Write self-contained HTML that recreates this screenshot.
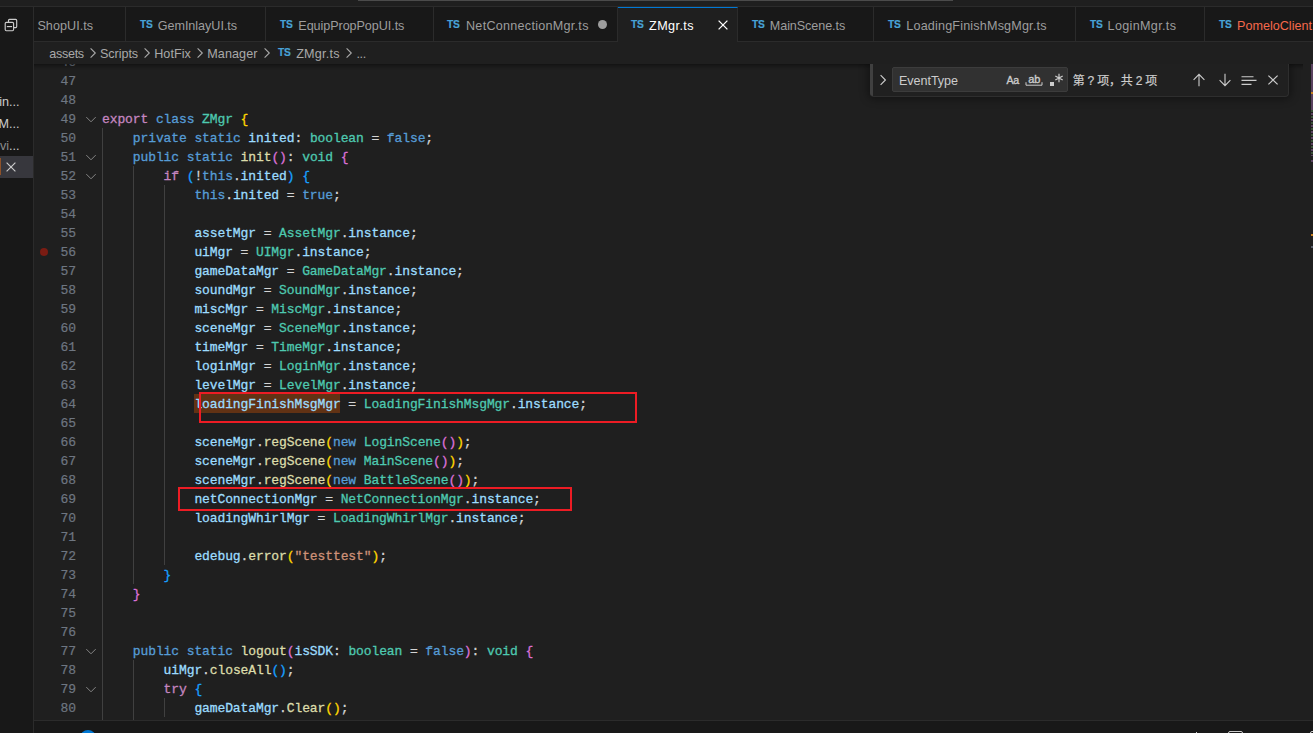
<!DOCTYPE html>
<html lang="zh-CN">
<head>
<meta charset="utf-8">
<title>ZMgr.ts</title>
<style>
html,body{margin:0;padding:0;background:#1f1f1f;}
body{width:1313px;height:733px;position:relative;overflow:hidden;font-family:"Liberation Sans","Noto Sans CJK SC",sans-serif;font-size:13px;color:#cccccc;}
div,span,svg{box-sizing:border-box}
.abs{position:absolute}
#top{position:absolute;left:0;top:0;width:1313px;height:6px;background:#1f1f1f}
#topline{position:absolute;left:0;top:6px;width:1313px;height:1px;background:#2b2b2b}
#cc{position:absolute;left:358px;top:0;width:595px;height:1px;background:#4b4b4b}
#side{position:absolute;left:0;top:7px;width:33px;height:726px;background:#181818}
#sideb{position:absolute;left:33px;top:7px;width:1px;height:726px;background:#2b2b2b}
#tabbar{position:absolute;left:34px;top:7px;width:1279px;height:35px;background:#181818;border-bottom:1px solid #2b2b2b}
.tab{position:absolute;top:7px;height:35px;background:#181818;border-right:1px solid #2b2b2b;border-bottom:1px solid #2b2b2b}
.tab.act{background:#1f1f1f;border-top:1px solid #0078d4;border-bottom:none}
.ts{position:absolute;font-family:"Liberation Sans",sans-serif;font-weight:bold;font-size:11px;line-height:14px;color:#48a3d8;letter-spacing:-0.35px;transform:scaleX(.93);transform-origin:0 0;-webkit-text-stroke:0.2px}
.tl{position:absolute;top:18px;font-size:12.6px;line-height:17px;white-space:pre}
.dot{position:absolute;width:9px;height:9px;border-radius:50%;background:#9d9d9d}
#bc{position:absolute;left:34px;top:42px;width:1279px;height:22px;background:#1f1f1f}
.bt{position:absolute;top:46px;font-size:12.6px;line-height:17px;color:#a9a9a9;white-space:pre}
#shadow{position:absolute;left:34px;top:64px;width:1269px;height:6px;box-shadow:inset 0 6px 6px -6px rgba(0,0,0,.8)}
#ed{position:absolute;left:34px;top:64px;width:1279px;height:656px;overflow:hidden}
.ln{-webkit-text-stroke:0.2px;position:absolute;left:33.5px;width:42.5px;text-align:right;color:#6e7681;font:13px/19px "Liberation Mono",monospace;letter-spacing:-0.104px;height:19px}
.cl{position:absolute;left:102px;height:19px;white-space:pre;font:13px/19px "Liberation Mono",monospace;letter-spacing:-0.104px;color:#d4d4d4;-webkit-text-stroke:0.3px}
.fold{position:absolute;left:83px}
.ig{position:absolute;width:1px;background:#404040}
#hl{position:absolute;left:194px;top:394px;width:146px;height:19px;background:#613214}
.rr{position:absolute;border:2px solid #ed1c24}
#panelb{position:absolute;left:34px;top:720px;width:1279px;height:1px;background:#2b2b2b}
#panel{position:absolute;left:34px;top:721px;width:1279px;height:12px;background:#181818}
#findclip{position:absolute;left:834px;top:64px;width:479px;height:80px;overflow:hidden}
#find{position:absolute;left:36px;top:0px;width:419px;height:33px;background:#202020;border-bottom:1px solid #2e2e2e;border-right:1px solid #2e2e2e;border-radius:0 0 4px 4px;box-shadow:0 0 8px 2px rgba(0,0,0,.4)}
#sash{position:absolute;left:0;top:0;width:3px;height:32px;background:#404040;border-radius:0 0 0 4px}
#finput{position:absolute;left:22px;top:3px;width:176px;height:25px;background:#313131;border:1px solid #3c3c3c;border-radius:2px}
#ftext{position:absolute;left:6px;top:4.5px;font-size:12.6px;line-height:17px;color:#cccccc;letter-spacing:-0.06px}
.fi{position:absolute;line-height:16px;color:#cccccc}
#fcount{-webkit-text-stroke:0.2px;position:absolute;left:202.7px;top:8px;font-size:12px;line-height:18px;color:#cccccc;white-space:pre;letter-spacing:-0.2px}
.st{position:absolute;right:1293.5px;font-size:12.6px;line-height:17px;color:#cccccc;white-space:pre}
#selrow{position:absolute;left:0;top:156px;width:33px;height:22px;background:#37373d}
#selbar{position:absolute;left:0;top:2px;width:1px;height:17px;background:#8f5229}
#mm{position:absolute;left:1311px;top:64px;width:2px;height:656px}
</style>
</head>
<body>
<div id="top"></div><div id="cc"></div><div id="topline"></div>
<div id="tabbar"></div>
<div class="tab" style="left:34px;width:92px"></div>
<span class="tl" style="left:37.4px;color:#9d9d9d;letter-spacing:0.054px">ShopUI.ts</span>
<div class="tab" style="left:126px;width:140px"></div>
<span class="ts" style="left:139.6px;top:17px">TS</span>
<span class="tl" style="left:157.7px;color:#9d9d9d;letter-spacing:-0.029px">GemInlayUI.ts</span>
<div class="tab" style="left:266px;width:168px"></div>
<span class="ts" style="left:279.9px;top:17px">TS</span>
<span class="tl" style="left:298.3px;color:#9d9d9d;letter-spacing:-0.065px">EquipPropPopUI.ts</span>
<div class="tab" style="left:434px;width:184px"></div>
<span class="ts" style="left:446.6px;top:17px">TS</span>
<span class="tl" style="left:466.0px;color:#9d9d9d;letter-spacing:0.268px">NetConnectionMgr.ts</span>
<div class="dot" style="left:598px;top:20px"></div>
<div class="tab act" style="left:618px;width:120px"></div>
<span class="ts" style="left:631.4px;top:17px">TS</span>
<span class="tl" style="left:649.1px;color:#ffffff;letter-spacing:0.402px">ZMgr.ts</span>
<svg style="position:absolute;left:715px;top:17px" width="16" height="16" viewBox="0 0 16 16"><path d="M3.6 3.6l8.8 8.8M12.4 3.6l-8.8 8.8" stroke="#ffffff" stroke-width="1.3" fill="none"/></svg>
<div class="tab" style="left:738px;width:136px"></div>
<span class="ts" style="left:751.6px;top:17px">TS</span>
<span class="tl" style="left:769.8px;color:#9d9d9d;letter-spacing:-0.076px">MainScene.ts</span>
<div class="tab" style="left:874px;width:202px"></div>
<span class="ts" style="left:887.7px;top:17px">TS</span>
<span class="tl" style="left:906.3px;color:#9d9d9d;letter-spacing:0.173px">LoadingFinishMsgMgr.ts</span>
<div class="tab" style="left:1076px;width:129px"></div>
<span class="ts" style="left:1089.5px;top:17px">TS</span>
<span class="tl" style="left:1107.6px;color:#9d9d9d;letter-spacing:0.326px">LoginMgr.ts</span>
<div class="tab" style="left:1205px;width:196px"></div>
<span class="ts" style="left:1219.1px;top:17px">TS</span>
<span class="tl" style="left:1237.0px;color:#f6694b;letter-spacing:0.006px">PomeloClient.ts</span>
<div id="bc"></div>

<div id="hl"></div>
<div class="ig" style="left:102px;top:128px;height:592px"></div>
<div class="ig" style="left:133px;top:166px;height:418px"></div>
<div class="ig" style="left:164px;top:185px;height:380px"></div>
<div class="ig" style="left:133px;top:660px;height:60px"></div>
<div class="ig" style="left:164px;top:698px;height:19px"></div>
<div class="ln" style="top:53px">46</div>
<div class="ln" style="top:72px">47</div>
<div class="ln" style="top:91px">48</div>
<div class="ln" style="top:110px">49</div>
<svg class="fold" style="top:112px" width="16" height="16" viewBox="0 0 16 16"><path d="M3.3 5.1 8 9.8l4.7-4.7" fill="none" stroke="#858585" stroke-width="1"/></svg>
<div class="cl" style="top:110px"><span style="color:#c586c0">export</span> <span style="color:#569cd6">class</span> <span style="color:#4ec9b0">ZMgr</span> <span style="color:#ffd700">{</span></div>
<div class="ln" style="top:129px">50</div>
<div class="cl" style="top:129px">    <span style="color:#569cd6">private</span> <span style="color:#569cd6">static</span> <span style="color:#9cdcfe">inited</span><span style="color:#d4d4d4">: </span><span style="color:#4ec9b0">boolean</span><span style="color:#d4d4d4"> = </span><span style="color:#569cd6">false</span><span style="color:#d4d4d4">;</span></div>
<div class="ln" style="top:148px">51</div>
<svg class="fold" style="top:150px" width="16" height="16" viewBox="0 0 16 16"><path d="M3.3 5.1 8 9.8l4.7-4.7" fill="none" stroke="#858585" stroke-width="1"/></svg>
<div class="cl" style="top:148px">    <span style="color:#569cd6">public</span> <span style="color:#569cd6">static</span> <span style="color:#dcdcaa">init</span><span style="color:#da70d6">()</span><span style="color:#d4d4d4">: </span><span style="color:#4ec9b0">void</span> <span style="color:#da70d6">{</span></div>
<div class="ln" style="top:167px">52</div>
<svg class="fold" style="top:169px" width="16" height="16" viewBox="0 0 16 16"><path d="M3.3 5.1 8 9.8l4.7-4.7" fill="none" stroke="#858585" stroke-width="1"/></svg>
<div class="cl" style="top:167px">        <span style="color:#c586c0">if</span> <span style="color:#179fff">(</span><span style="color:#d4d4d4">!</span><span style="color:#569cd6">this</span><span style="color:#d4d4d4">.</span><span style="color:#9cdcfe">inited</span><span style="color:#179fff">)</span> <span style="color:#179fff">{</span></div>
<div class="ln" style="top:186px">53</div>
<div class="cl" style="top:186px">            <span style="color:#569cd6">this</span><span style="color:#d4d4d4">.</span><span style="color:#9cdcfe">inited</span><span style="color:#d4d4d4"> = </span><span style="color:#569cd6">true</span><span style="color:#d4d4d4">;</span></div>
<div class="ln" style="top:205px">54</div>
<div class="ln" style="top:224px">55</div>
<div class="cl" style="top:224px">            <span style="color:#9cdcfe">assetMgr</span><span style="color:#d4d4d4"> = </span><span style="color:#4ec9b0">AssetMgr</span><span style="color:#d4d4d4">.</span><span style="color:#9cdcfe">instance</span><span style="color:#d4d4d4">;</span></div>
<div class="ln" style="top:243px">56</div>
<div class="cl" style="top:243px">            <span style="color:#9cdcfe">uiMgr</span><span style="color:#d4d4d4"> = </span><span style="color:#4ec9b0">UIMgr</span><span style="color:#d4d4d4">.</span><span style="color:#9cdcfe">instance</span><span style="color:#d4d4d4">;</span></div>
<div class="ln" style="top:262px">57</div>
<div class="cl" style="top:262px">            <span style="color:#9cdcfe">gameDataMgr</span><span style="color:#d4d4d4"> = </span><span style="color:#4ec9b0">GameDataMgr</span><span style="color:#d4d4d4">.</span><span style="color:#9cdcfe">instance</span><span style="color:#d4d4d4">;</span></div>
<div class="ln" style="top:281px">58</div>
<div class="cl" style="top:281px">            <span style="color:#9cdcfe">soundMgr</span><span style="color:#d4d4d4"> = </span><span style="color:#4ec9b0">SoundMgr</span><span style="color:#d4d4d4">.</span><span style="color:#9cdcfe">instance</span><span style="color:#d4d4d4">;</span></div>
<div class="ln" style="top:300px">59</div>
<div class="cl" style="top:300px">            <span style="color:#9cdcfe">miscMgr</span><span style="color:#d4d4d4"> = </span><span style="color:#4ec9b0">MiscMgr</span><span style="color:#d4d4d4">.</span><span style="color:#9cdcfe">instance</span><span style="color:#d4d4d4">;</span></div>
<div class="ln" style="top:319px">60</div>
<div class="cl" style="top:319px">            <span style="color:#9cdcfe">sceneMgr</span><span style="color:#d4d4d4"> = </span><span style="color:#4ec9b0">SceneMgr</span><span style="color:#d4d4d4">.</span><span style="color:#9cdcfe">instance</span><span style="color:#d4d4d4">;</span></div>
<div class="ln" style="top:338px">61</div>
<div class="cl" style="top:338px">            <span style="color:#9cdcfe">timeMgr</span><span style="color:#d4d4d4"> = </span><span style="color:#4ec9b0">TimeMgr</span><span style="color:#d4d4d4">.</span><span style="color:#9cdcfe">instance</span><span style="color:#d4d4d4">;</span></div>
<div class="ln" style="top:357px">62</div>
<div class="cl" style="top:357px">            <span style="color:#9cdcfe">loginMgr</span><span style="color:#d4d4d4"> = </span><span style="color:#4ec9b0">LoginMgr</span><span style="color:#d4d4d4">.</span><span style="color:#9cdcfe">instance</span><span style="color:#d4d4d4">;</span></div>
<div class="ln" style="top:376px">63</div>
<div class="cl" style="top:376px">            <span style="color:#9cdcfe">levelMgr</span><span style="color:#d4d4d4"> = </span><span style="color:#4ec9b0">LevelMgr</span><span style="color:#d4d4d4">.</span><span style="color:#9cdcfe">instance</span><span style="color:#d4d4d4">;</span></div>
<div class="ln" style="top:395px">64</div>
<div class="cl" style="top:395px">            <span style="color:#9cdcfe">loadingFinishMsgMgr</span><span style="color:#d4d4d4"> = </span><span style="color:#4ec9b0">LoadingFinishMsgMgr</span><span style="color:#d4d4d4">.</span><span style="color:#9cdcfe">instance</span><span style="color:#d4d4d4">;</span></div>
<div class="ln" style="top:414px">65</div>
<div class="ln" style="top:433px">66</div>
<div class="cl" style="top:433px">            <span style="color:#9cdcfe">sceneMgr</span><span style="color:#d4d4d4">.</span><span style="color:#dcdcaa">regScene</span><span style="color:#ffd700">(</span><span style="color:#569cd6">new</span> <span style="color:#4ec9b0">LoginScene</span><span style="color:#da70d6">()</span><span style="color:#ffd700">)</span><span style="color:#d4d4d4">;</span></div>
<div class="ln" style="top:452px">67</div>
<div class="cl" style="top:452px">            <span style="color:#9cdcfe">sceneMgr</span><span style="color:#d4d4d4">.</span><span style="color:#dcdcaa">regScene</span><span style="color:#ffd700">(</span><span style="color:#569cd6">new</span> <span style="color:#4ec9b0">MainScene</span><span style="color:#da70d6">()</span><span style="color:#ffd700">)</span><span style="color:#d4d4d4">;</span></div>
<div class="ln" style="top:471px">68</div>
<div class="cl" style="top:471px">            <span style="color:#9cdcfe">sceneMgr</span><span style="color:#d4d4d4">.</span><span style="color:#dcdcaa">regScene</span><span style="color:#ffd700">(</span><span style="color:#569cd6">new</span> <span style="color:#4ec9b0">BattleScene</span><span style="color:#da70d6">()</span><span style="color:#ffd700">)</span><span style="color:#d4d4d4">;</span></div>
<div class="ln" style="top:490px">69</div>
<div class="cl" style="top:490px">            <span style="color:#9cdcfe">netConnectionMgr</span><span style="color:#d4d4d4"> = </span><span style="color:#4ec9b0">NetConnectionMgr</span><span style="color:#d4d4d4">.</span><span style="color:#9cdcfe">instance</span><span style="color:#d4d4d4">;</span></div>
<div class="ln" style="top:509px">70</div>
<div class="cl" style="top:509px">            <span style="color:#9cdcfe">loadingWhirlMgr</span><span style="color:#d4d4d4"> = </span><span style="color:#4ec9b0">LoadingWhirlMgr</span><span style="color:#d4d4d4">.</span><span style="color:#9cdcfe">instance</span><span style="color:#d4d4d4">;</span></div>
<div class="ln" style="top:528px">71</div>
<div class="ln" style="top:547px">72</div>
<div class="cl" style="top:547px">            <span style="color:#9cdcfe">edebug</span><span style="color:#d4d4d4">.</span><span style="color:#dcdcaa">error</span><span style="color:#ffd700">(</span><span style="color:#ce9178">&quot;testtest&quot;</span><span style="color:#ffd700">)</span><span style="color:#d4d4d4">;</span></div>
<div class="ln" style="top:566px">73</div>
<div class="cl" style="top:566px">        <span style="color:#179fff">}</span></div>
<div class="ln" style="top:585px">74</div>
<div class="cl" style="top:585px">    <span style="color:#da70d6">}</span></div>
<div class="ln" style="top:604px">75</div>
<div class="ln" style="top:623px">76</div>
<div class="ln" style="top:642px">77</div>
<svg class="fold" style="top:644px" width="16" height="16" viewBox="0 0 16 16"><path d="M3.3 5.1 8 9.8l4.7-4.7" fill="none" stroke="#858585" stroke-width="1"/></svg>
<div class="cl" style="top:642px">    <span style="color:#569cd6">public</span> <span style="color:#569cd6">static</span> <span style="color:#dcdcaa">logout</span><span style="color:#da70d6">(</span><span style="color:#9cdcfe">isSDK</span><span style="color:#d4d4d4">: </span><span style="color:#4ec9b0">boolean</span><span style="color:#d4d4d4"> = </span><span style="color:#569cd6">false</span><span style="color:#da70d6">)</span><span style="color:#d4d4d4">: </span><span style="color:#4ec9b0">void</span> <span style="color:#da70d6">{</span></div>
<div class="ln" style="top:661px">78</div>
<div class="cl" style="top:661px">        <span style="color:#9cdcfe">uiMgr</span><span style="color:#d4d4d4">.</span><span style="color:#dcdcaa">closeAll</span><span style="color:#179fff">()</span><span style="color:#d4d4d4">;</span></div>
<div class="ln" style="top:680px">79</div>
<svg class="fold" style="top:682px" width="16" height="16" viewBox="0 0 16 16"><path d="M3.3 5.1 8 9.8l4.7-4.7" fill="none" stroke="#858585" stroke-width="1"/></svg>
<div class="cl" style="top:680px">        <span style="color:#c586c0">try</span> <span style="color:#179fff">{</span></div>
<div class="ln" style="top:699px">80</div>
<div class="cl" style="top:699px">            <span style="color:#9cdcfe">gameDataMgr</span><span style="color:#d4d4d4">.</span><span style="color:#dcdcaa">Clear</span><span style="color:#ffd700">()</span><span style="color:#d4d4d4">;</span></div>
<div class="rr" style="left:199px;top:392px;width:438px;height:31px"></div>
<div class="rr" style="left:178px;top:487px;width:394px;height:24px"></div>
<div id="bcover" style="position:absolute;left:34px;top:42px;width:1279px;height:22px;background:#1f1f1f"></div>
<div id="shadow"></div>
<span class="bt" style="left:49.3px;letter-spacing:-0.318px">assets</span>
<span class="bt" style="left:100.0px;letter-spacing:-0.057px">Scripts</span>
<span class="bt" style="left:154.2px;letter-spacing:0.052px">HotFix</span>
<span class="bt" style="left:207.2px;letter-spacing:0.097px">Manager</span>
<span class="bt" style="left:296.2px;letter-spacing:0.217px">ZMgr.ts</span>
<span class="bt" style="left:356.5px;letter-spacing:-0.433px">...</span>
<svg style="position:absolute;left:85.0px;top:45px" width="16" height="16" viewBox="0 0 16 16"><path d="M5.6 3.3 10.3 8l-4.7 4.7" fill="none" stroke="#a9a9a9" stroke-width="1.1"/></svg>
<svg style="position:absolute;left:139.3px;top:45px" width="16" height="16" viewBox="0 0 16 16"><path d="M5.6 3.3 10.3 8l-4.7 4.7" fill="none" stroke="#a9a9a9" stroke-width="1.1"/></svg>
<svg style="position:absolute;left:192.0px;top:45px" width="16" height="16" viewBox="0 0 16 16"><path d="M5.6 3.3 10.3 8l-4.7 4.7" fill="none" stroke="#a9a9a9" stroke-width="1.1"/></svg>
<svg style="position:absolute;left:259.0px;top:45px" width="16" height="16" viewBox="0 0 16 16"><path d="M5.6 3.3 10.3 8l-4.7 4.7" fill="none" stroke="#a9a9a9" stroke-width="1.1"/></svg>
<svg style="position:absolute;left:341.0px;top:45px" width="16" height="16" viewBox="0 0 16 16"><path d="M5.6 3.3 10.3 8l-4.7 4.7" fill="none" stroke="#a9a9a9" stroke-width="1.1"/></svg>
<span class="ts" style="left:278.2px;top:45px">TS</span>
<div id="findclip"><div id="find">
<div id="sash"></div>
<svg style="position:absolute;left:5.0px;top:8px" width="16" height="16" viewBox="0 0 16 16"><path d="M5.6 3.2 10.4 8l-4.8 4.8" fill="none" stroke="#cccccc" stroke-width="1.15"/></svg>
<div id="finput"><span id="ftext">EventType</span>
<span class="fi" style="left:113.6px;top:4px;font-size:10.6px;letter-spacing:-0.5px;-webkit-text-stroke:0.35px">Aa</span>
<span class="fi" style="left:135.2px;top:3px;font-size:11px;letter-spacing:-0.1px;-webkit-text-stroke:0.35px">ab</span>
<svg style="position:absolute;left:132.2px;top:13px" width="20" height="6" viewBox="0 0 20 6"><path d="M1 1.2v3h16v-3" fill="none" stroke="#cccccc" stroke-width="1"/></svg>
<div style="position:absolute;left:156.5px;top:13.5px;width:4.8px;height:4.3px;background:#cccccc"></div>
<svg style="position:absolute;left:160.5px;top:5.2px" width="10" height="10" viewBox="0 0 10 10"><path d="M5 0.8v8.4M1.3 2.9l7.4 4.2M8.7 2.9 1.3 7.1" fill="none" stroke="#cccccc" stroke-width="1.2"/></svg>
</div>
<span id="fcount">第 ? 项，共 2 项</span>
<svg style="position:absolute;left:321.4px;top:8px" width="16" height="16" viewBox="0 0 16 16"><path d="M8 2.2v12M2.6 7.8 8 2.4l5.4 5.4" fill="none" stroke="#cccccc" stroke-width="1.1"/></svg>
<svg style="position:absolute;left:346.5px;top:8px" width="16" height="16" viewBox="0 0 16 16"><path d="M8 1.8v12M2.6 8.2 8 13.6l5.4-5.4" fill="none" stroke="#cccccc" stroke-width="1.1"/></svg>
<svg style="position:absolute;left:370.0px;top:8px" width="18" height="16" viewBox="0 0 18 16"><path d="M1.5 4.7h12M1.5 8.4h15M1.5 12.4h10" fill="none" stroke="#cccccc" stroke-width="1.1"/></svg>
<svg style="position:absolute;left:394.9px;top:8.2px" width="16" height="16" viewBox="0 0 16 16"><path d="M3.4 3.6l9.2 8.8M12.6 3.6l-9.2 8.8" fill="none" stroke="#cccccc" stroke-width="1.2"/></svg>
</div></div>
<div id="panelb"></div><div id="panel"></div>
<div style="position:absolute;left:39.5px;top:248px;width:8px;height:8px;border-radius:50%;background:#7a1c13"></div>
<div id="mm"><div style="position:absolute;left:0;top:0;width:2px;height:46px;background:#59425f"></div><div style="position:absolute;left:0;top:28px;width:2px;height:2px;background:#c8801e"></div><div style="position:absolute;left:0;top:46px;width:2px;height:46px;background:repeating-linear-gradient(#3a4f38 0 2px,#1f1f1f 2px 3px,#59425f 3px 5px,#1f1f1f 5px 6px)"></div><div style="position:absolute;left:0;top:96px;width:2px;height:2px;background:#59425f"></div><div style="position:absolute;left:0;top:170px;width:2px;height:2px;background:#c8801e"></div><div style="position:absolute;left:0;top:182px;width:2px;height:2px;background:#555a66"></div></div>
<div style="position:absolute;left:1228px;top:731px;width:15px;height:10px;border:1px solid #cccccc;border-radius:2px"></div>
<div style="position:absolute;left:1196px;top:732px;width:1px;height:1px;background:#cccccc"></div>
<div style="position:absolute;left:1310px;top:731px;width:6px;height:6px;border:1px solid #cccccc;border-radius:2px"></div>
<div id="side"></div><div id="sideb"></div>
<svg style="position:absolute;left:3px;top:17px" width="16" height="16" viewBox="0 0 16 16"><path d="M5.5 5V3.4a1 1 0 0 1 1-1h6.2a1 1 0 0 1 1 1v6.2a1 1 0 0 1-1 1h-1.7" fill="none" stroke="#cccccc" stroke-width="1.15"/><rect x="2.2" y="5.4" width="8.4" height="8.3" rx="1.2" fill="none" stroke="#cccccc" stroke-width="1.15"/><path d="M3.8 9.6h5.3" stroke="#cccccc" stroke-width="1.15"/></svg>
<span class="st" style="top:94px">in...</span>
<span class="st" style="top:116px">M...</span>
<span class="st" style="top:138px"><span style="color:#8c8c8c">rvi</span>...</span>
<div id="selrow"><div id="selbar"></div>
<svg style="position:absolute;left:3.2px;top:2.6px" width="16" height="16" viewBox="0 0 16 16"><path d="M3.6 3.6l8.8 8.8M12.4 3.6l-8.8 8.8" stroke="#cccccc" stroke-width="1.15" fill="none"/></svg></div>
<div style="position:absolute;left:80px;top:729.6px;width:16px;height:16px;border-radius:50%;background:#0078d4"></div>

</body>
</html>
